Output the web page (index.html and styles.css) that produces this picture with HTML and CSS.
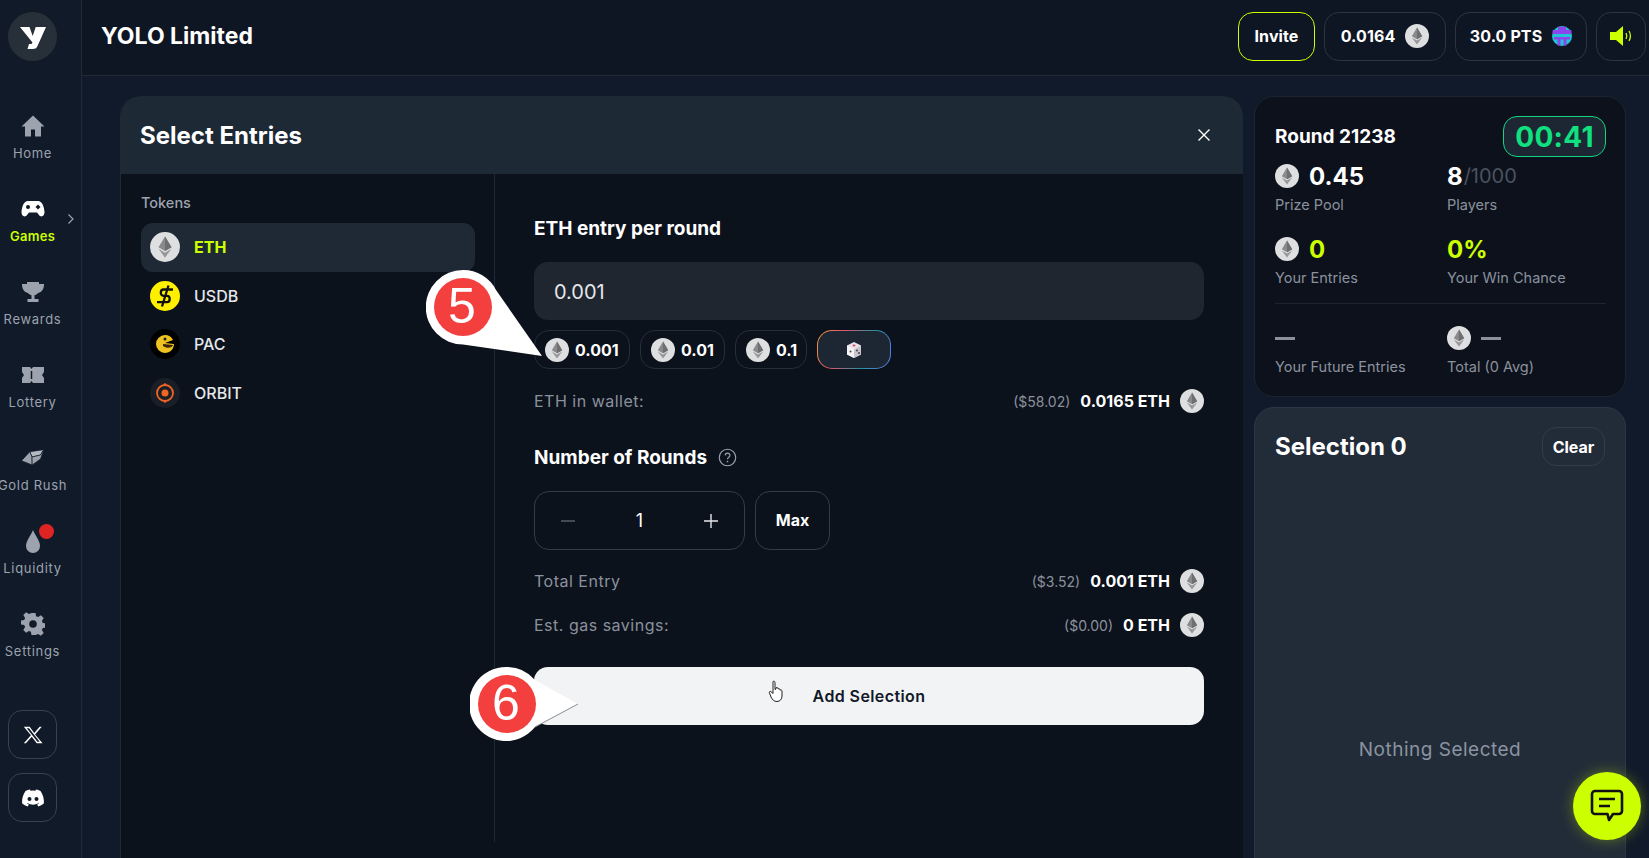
FILE: index.html
```html
<!DOCTYPE html>
<html lang="en">
<head>
    <meta charset="UTF-8">
    <title>YOLO Limited</title>
    <link rel="stylesheet" href="styles.css">
</head>
<body>
<svg class="defs" width="0" height="0">
    <symbol id="eth" viewBox="0 0 24 24">
        <circle cx="12" cy="12" r="12" fill="#dedfe0"/>
        <polygon points="12,3.5 6.8,12.2 12,15.2 17.2,12.2" fill="#8a8a8c"/>
        <polygon points="12,3.5 12,15.2 17.2,12.2" fill="#6f6f72"/>
        <polygon points="6.8,13.4 12,20.5 17.2,13.4 12,16.5" fill="#97979a"/>
    </symbol>
</svg>

<div class="app">
    <aside class="side">
        <div class="logo"><svg width="26" height="26" viewBox="0 0 26 26"><path d="M0 3h9.500l3.200 9 3-9H26l-8.500 19c-1 2.400-2.500 3-5 3H7.500l1.500-5h2.500l1-1.500z" fill="#fff"/></svg></div>
        <nav class="nav">
            <a class="nav-item">
                <svg class="nav-icon" viewBox="0 0 24 24"><path d="M12 1.500 0.500 12.500h3.500v10h6v-7h4v7h6v-10h3.500z" fill="#9ca3af"/></svg>
                <span>Home</span>
            </a>
            <a class="nav-item active">
                <svg class="nav-icon" viewBox="0 0 24 24"><path d="M7 4h10c4 0 6 5 6.500 11 .3 4-3.500 6-5.500 3l-2-2.500H8L6 18c-2 3-5.800 1-5.500-3C1 9 3 4 7 4z" fill="#fff"/><circle cx="7" cy="10" r="2" fill="#111a28"/><path d="M17 7.500l2.500 2.500-2.500 2.500-2.500-2.500z" fill="#111a28"/></svg>
                <span>Games</span>
                <svg class="chevron" width="8" height="12" viewBox="0 0 8 12"><path d="M1.500 1.500 6 6l-4.500 4.500" fill="none" stroke="#9ca3af" stroke-width="1.200"/></svg>
            </a>
            <a class="nav-item">
                <svg class="nav-icon" viewBox="0 0 24 24"><path d="M6 2h12v2h5c0 5-2 8-6 9-1 1.500-2.500 2-3.500 2.300V19h4v3H6.500v-3h4v-3.700C9.500 15 8 14.500 7 13c-4-1-6-4-6-9h5z" fill="#9ca3af"/></svg>
                <span>Rewards</span>
            </a>
            <a class="nav-item">
                <svg class="nav-icon" viewBox="0 0 24 24"><path d="M1 4h8l1.500 2L12 4h11v5l-2 3 2 3v5H12l-1.500-2L9 20H1v-5l2-3-2-3z" fill="#9ca3af"/><path d="M10.500 8v8" stroke="#111a28" stroke-width="1.500"/></svg>
                <span>Lottery</span>
            </a>
            <a class="nav-item">
                <svg class="nav-icon" viewBox="0 0 24 24"><g stroke="#111a28" stroke-width=".7"><polygon points="8.800,5.700 22.800,3.700 19.500,9 11,11" fill="#b5bac2"/><polygon points="0.500,14.700 8.800,5.700 11,11 11.200,19" fill="#9ca3af"/><polygon points="11,11 19.500,9 22.800,3.700 19.500,13 11.200,19" fill="#9ca3af"/></g></svg>
                <span class="wide">Gold Rush</span>
            </a>
            <a class="nav-item">
                <svg class="nav-icon" viewBox="0 0 24 24"><path d="M12 1c2 5 7 11 7 16a7 7 0 0 1-14 0c0-5 5-11 7-16z" fill="#9ca3af"/></svg>
                <span>Liquidity</span>
                <i class="dot"></i>
            </a>
            <a class="nav-item">
                <svg class="nav-icon" viewBox="0 0 24 24"><path d="M10 1h4l.6 3.200 2 .9L19.400 3.300l2.800 2.800-1.800 2.800.9 2 3.200.6v4l-3.200.6-.9 2 1.800 2.800-2.800 2.800-2.800-1.800-2 .9L14 23h-4l-.6-3.200-2-.9-2.800 1.800-2.800-2.800 1.800-2.800-.9-2L-.5 12.500v-4l3.200-.6.900-2-1.800-2.800 2.800-2.800 2.800 1.800 2-.9z" transform="translate(.5 0)" fill="#9ca3af"/><circle cx="12" cy="12" r="3.800" fill="#111a28"/></svg>
                <span>Settings</span>
            </a>
        </nav>
        <div class="socials">
            <a class="social"><svg width="20" height="20" viewBox="0 0 24 24"><path d="M1 2h7l5.500 7.500L20 2h2.500l-8 9.300L23.500 22h-7l-6-8L3.500 22H1l8.500-9.800zM4.500 3.800 17.300 20.200h2.700L7.200 3.800z" fill="#fff"/></svg></a>
            <a class="social"><svg width="22" height="18" viewBox="0 0 22 18"><path d="M18.500 2A17 17 0 0 0 14 .5l-.6 1.200a15 15 0 0 0-4.800 0L8 .5A17 17 0 0 0 3.500 2C.6 6.300-.2 10.500.2 14.600A17 17 0 0 0 5.700 17.500l1.200-1.900-1.900-.9.500-.4a12 12 0 0 0 11 0l.5.400-1.900.9 1.200 1.900a17 17 0 0 0 5.500-2.900c.5-4.800-.8-9-3.300-12.600z" fill="#fff"/><circle cx="7.500" cy="10" r="2" fill="#111a28"/><circle cx="14.500" cy="10" r="2" fill="#111a28"/></svg></a>
        </div>
    </aside>

    <div class="main">
        <header class="top">
            <div class="title">YOLO Limited</div>
            <div class="top-actions">
                <a class="pill invite">Invite</a>
                <a class="pill balance">0.0164 <svg class="eth"><use href="#eth"/></svg></a>
                <a class="pill points">30.0 PTS
                    <svg width="20" height="20" viewBox="0 0 20 20"><circle cx="10" cy="10" r="10" fill="#1fc4d6"/><path d="M6 .8h8V4h5.400v4H.6V4H6zM2 11h16v2.500h-3.500v6H11.500v-6h-3v6H5.500v-6H2z" fill="#8e44ec"/></svg>
                </a>
                <a class="pill sound">
                    <svg width="24" height="24" viewBox="0 0 24 24"><path d="M1 8h6l7-6v20l-7-6H1z" fill="#ccff00"/><path d="M17 9c1 1.800 1 4.200 0 6M20 7c1.700 3 1.700 7 0 10" fill="none" stroke="#ccff00" stroke-width="1.300"/></svg>
                </a>
            </div>
        </header>

        <div class="content">
            <section class="modal">
                <div class="modal-head">
                    <h2>Select Entries</h2>
                    <svg width="14" height="14" viewBox="0 0 14 14"><path d="M1.500 1.500l11 11M12.500 1.500l-11 11" stroke="#fff" stroke-width="1.400"/></svg>
                </div>
                <div class="modal-body">
                    <div class="tokens">
                        <div class="tokens-label">Tokens</div>
                        <div class="token selected"><svg class="token-icon"><use href="#eth"/></svg>ETH</div>
                        <div class="token">
                            <svg class="token-icon" viewBox="0 0 30 30"><circle cx="15" cy="15" r="15" fill="#fff000"/><path d="M23 8.500H13.500c-3.600 0-3.600 6.300 0 6.300h3.500c3.600 0 3.600 6.400 0 6.400H7M18.500 4.500l-6.500 21" fill="none" stroke="#111" stroke-width="2.300"/></svg>USDB
                        </div>
                        <div class="token">
                            <svg class="token-icon" viewBox="0 0 30 30"><circle cx="15" cy="15" r="15" fill="#000"/><path d="M15 6a9 9 0 0 1 8 5l-8 3 9 1c0 5-4 9-9 9A9 9 0 0 1 15 6z" fill="#eec21f"/><path d="M13 15l10 1c-1 3-6 4-10 1z" fill="#3b2408"/><circle cx="15" cy="10" r="1.500" fill="#222"/></svg>PAC
                        </div>
                        <div class="token">
                            <svg class="token-icon" viewBox="0 0 30 30"><circle cx="15" cy="15" r="15" fill="#1a1f27"/><circle cx="15" cy="15" r="8" fill="none" stroke="#f26522" stroke-width="1.800"/><circle cx="15" cy="15" r="3.500" fill="#f26522"/><circle cx="15" cy="6.500" r="1.300" fill="#f26522"/><circle cx="15" cy="23.500" r="1.300" fill="#f26522"/></svg>ORBIT
                        </div>
                    </div>

                    <div class="form">
                        <h3 class="form-title">ETH entry per round</h3>
                        <div class="amount">0.001</div>
                        <div class="chips">
                            <a class="chip c1"><svg class="eth"><use href="#eth"/></svg>0.001</a>
                            <a class="chip c2"><svg class="eth"><use href="#eth"/></svg>0.01</a>
                            <a class="chip c3"><svg class="eth"><use href="#eth"/></svg>0.1</a>
                            <a class="chip dice">
                                <svg width="18" height="18" viewBox="0 0 18 18"><path d="M9 1l7 3.500v9L9 17l-7-3.500v-9z" fill="#e9e4ea"/><path d="M9 8.500V17l7-3.500v-9z" fill="#c9c3cd"/><path d="M2 4.500 9 8.500V17l-7-3.500z" fill="#f6f2f5"/><ellipse cx="9" cy="4.500" rx="1.500" ry="1" fill="#e0435a"/><circle cx="5.500" cy="10.500" r="1" fill="#444"/><circle cx="12" cy="9.500" r="1" fill="#444"/><circle cx="14" cy="12" r="1" fill="#444"/></svg>
                            </a>
                        </div>
                        <div class="line wallet">
                            <span class="line-label">ETH in wallet:</span>
                            <span class="line-value"><small>($58.02)</small><b>0.0165 ETH</b><svg class="eth"><use href="#eth"/></svg></span>
                        </div>
                        <h3 class="form-title rounds">Number of Rounds
                            <svg width="19" height="19" viewBox="0 0 18 18"><circle cx="9" cy="9" r="7.800" fill="none" stroke="#9ca3af" stroke-width="1.100"/><path d="M6.800 7c.2-3 4.600-2.800 4.500 0 0 1.800-2.300 1.800-2.300 3.600" fill="none" stroke="#9ca3af" stroke-width="1.100"/><circle cx="9" cy="12.800" r=".8" fill="#9ca3af"/></svg>
                        </h3>
                        <div class="stepper-row">
                            <div class="stepper">
                                <svg width="16" height="16" viewBox="0 0 16 16"><path d="M1 8h14" stroke="#5b6370" stroke-width="1.400"/></svg>
                                <span>1</span>
                                <svg width="16" height="16" viewBox="0 0 16 16"><path d="M1 8h14M8 1v14" stroke="#e5e7eb" stroke-width="1.400"/></svg>
                            </div>
                            <a class="max">Max</a>
                        </div>
                        <div class="line total">
                            <span class="line-label">Total Entry</span>
                            <span class="line-value"><small>($3.52)</small><b>0.001 ETH</b><svg class="eth"><use href="#eth"/></svg></span>
                        </div>
                        <div class="line gas">
                            <span class="line-label">Est. gas savings:</span>
                            <span class="line-value"><small>($0.00)</small><b>0 ETH</b><svg class="eth"><use href="#eth"/></svg></span>
                        </div>
                        <a class="add">Add Selection</a>
                    </div>
                </div>
            </section>

            <div class="rail">
                <section class="round">
                    <div class="round-head">
                        <span class="round-title">Round 21238</span>
                        <span class="timer">00:41</span>
                    </div>
                    <div class="stats">
                        <div>
                            <div class="stat-value"><svg class="eth"><use href="#eth"/></svg>0.45</div>
                            <div class="stat-label">Prize Pool</div>
                        </div>
                        <div>
                            <div class="stat-value">8<em>/1000</em></div>
                            <div class="stat-label">Players</div>
                        </div>
                        <div>
                            <div class="stat-value lime"><svg class="eth"><use href="#eth"/></svg>0</div>
                            <div class="stat-label">Your Entries</div>
                        </div>
                        <div>
                            <div class="stat-value lime">0%</div>
                            <div class="stat-label">Your Win Chance</div>
                        </div>
                    </div>
                    <div class="divider"></div>
                    <div class="stats">
                        <div>
                            <div class="stat-value"><i class="dash"></i></div>
                            <div class="stat-label">Your Future Entries</div>
                        </div>
                        <div>
                            <div class="stat-value"><svg class="eth"><use href="#eth"/></svg><i class="dash"></i></div>
                            <div class="stat-label">Total (0 Avg)</div>
                        </div>
                    </div>
                </section>
                <section class="selection">
                    <div class="selection-head">
                        <h2>Selection 0</h2>
                        <a class="clear">Clear</a>
                    </div>
                    <div class="empty">Nothing Selected</div>
                </section>
            </div>
        </div>
    </div>
</div>

<a class="chat">
    <svg width="36" height="36" viewBox="0 0 36 36"><path d="M6 3h24a3 3 0 0 1 3 3v17a3 3 0 0 1-3 3h-6l-4 6-1.500-6H6a3 3 0 0 1-3-3V6a3 3 0 0 1 3-3z" fill="none" stroke="#111" stroke-width="2.600" stroke-linejoin="round"/><path d="M10 11h16M10 18h11" stroke="#111" stroke-width="2.600"/></svg>
</a>

<div class="callout callout-5">
    <svg width="130" height="100" viewBox="0 0 130 100"><path d="M37 0a37 37 0 0 1 33 20l46 66-79-11.500A37 37 0 0 1 37 0z" fill="#fff"/><circle cx="37" cy="37" r="29" fill="#f43f3f"/></svg>
    <span>5</span>
</div>
<div class="callout callout-6">
    <svg width="110" height="76" viewBox="0 0 110 76"><path d="M37 1a37 37 0 0 1 28 13l43 24-43 23A37 37 0 1 1 37 1z" fill="#fff"/><path d="M65 61l43-23" stroke="#8a8d92" stroke-width="1"/><circle cx="37" cy="38" r="29" fill="#f43f3f"/></svg>
    <span>6</span>
</div>
<svg class="cursor" width="18" height="23" viewBox="0 0 18 23"><path d="M5 1.500c1-.8 2 0 2 1v7l1-.5V7.800c1-.8 2-.2 2 .7v.5c1-.7 2-.2 2 .7v.5c1-.6 2 0 2 .8v5c0 3-2 5.500-5 5.500-3.500 0-4.500-2-6-4.500L1.500 13c-.8-1 .6-2.200 1.500-1.300L5 13.500z" fill="#fff" stroke="#222" stroke-width="1"/></svg>
</body>
</html>
```

FILE: styles.css
```css
* {
    box-sizing: border-box;
}

html, body {
    height: 100%;
    margin: 0;
    overflow: hidden;
}

body {
    background: #111a2a;
    color: #fff;
    font-family: "Inter", "Noto Sans", sans-serif;
}

h2, h3 {
    margin: 0;
}

.defs {
    position: absolute;
}

.app {
    display: flex;
    height: 100%;
}

/* sidebar */
.side {
    width: 82px;
    flex: none;
    padding: 12px 0 0 8px;
    background: #111a28;
    border-right: 1px solid #1f2937;
}

.logo {
    width: 49px;
    height: 49px;
    border-radius: 50%;
    background: #273038;
    display: flex;
    align-items: center;
    justify-content: center;
}

.nav {
    margin-top: 53px;
    display: flex;
    flex-direction: column;
    gap: 35px;
}

.nav-item {
    position: relative;
    width: 49px;
    height: 48px;
    display: flex;
    flex-direction: column;
    align-items: center;
    font-size: 13px;
    line-height: 18px;
    letter-spacing: 0.7px;
    color: #9ca3af;
    white-space: nowrap;
}

.nav-item span {
    margin-top: 6px;
}

.nav-icon {
    width: 24px;
    height: 24px;
    flex: none;
}

.nav-item.active {
    color: #ccff00;
    font-weight: 600;
    letter-spacing: 0.3px;
}

.chevron {
    position: absolute;
    left: 59px;
    top: 16px;
}

.dot {
    position: absolute;
    left: 31px;
    top: -5px;
    width: 15px;
    height: 15px;
    border-radius: 50%;
    background: #e02424;
}

.socials {
    margin-top: 50px;
    display: flex;
    flex-direction: column;
    gap: 14px;
}

.social {
    width: 49px;
    height: 49px;
    border: 1px solid #374151;
    border-radius: 14px;
    display: flex;
    align-items: center;
    justify-content: center;
}

/* top bar */
.main {
    flex: 1;
    min-width: 0;
    display: flex;
    flex-direction: column;
}

.top {
    height: 76px;
    flex: none;
    padding: 0 3px 3px 19px;
    background: #0f1623;
    border-bottom: 1px solid #1f2937;
    display: flex;
    align-items: center;
    justify-content: space-between;
}

.title {
    font-size: 23px;
    font-weight: 700;
}

.top-actions {
    display: flex;
    gap: 9px;
}

.pill {
    height: 49px;
    border: 1px solid #2b3442;
    border-radius: 15px;
    display: flex;
    align-items: center;
    justify-content: center;
    gap: 10px;
    font-size: 16px;
    font-weight: 700;
    letter-spacing: 0.1px;
}

.invite {
    width: 77px;
    border-color: #ccff00;
}

.balance {
    width: 122px;
}

.points {
    width: 132px;
}

.sound {
    width: 50px;
}

.eth {
    width: 24px;
    height: 24px;
    flex: none;
}

/* main area */
.content {
    flex: 1;
    min-height: 0;
    padding: 20px 22px 0 38px;
    display: flex;
    gap: 11px;
    overflow: hidden;
}

.modal {
    width: 1123px;
    flex: none;
    height: 900px;
    background: #0c121c;
    border-radius: 20px 20px 0 0;
    border-left: 1px solid #1f2937;
}

.modal-head {
    height: 78px;
    padding: 0 32px 0 19px;
    background: #1e2936;
    border-radius: 20px 20px 0 0;
    display: flex;
    align-items: center;
    justify-content: space-between;
}

.modal-head h2 {
    font-size: 24px;
    font-weight: 700;
}

.modal-body {
    display: flex;
}

.tokens {
    width: 374px;
    height: 668px;
    flex: none;
    padding: 19px 19px 0 20px;
    border-right: 1px solid #1f2937;
}

.tokens-label {
    font-size: 14.5px;
    line-height: 20px;
    font-weight: 500;
    color: #9ca3af;
    margin-bottom: 10px;
}

.token {
    height: 48.6px;
    padding-left: 9px;
    display: flex;
    align-items: center;
    gap: 14px;
    font-size: 16px;
    line-height: 20px;
    font-weight: 500;
    color: #e5e7eb;
    border-radius: 12px;
}

.token-icon {
    width: 30px;
    height: 30px;
    flex: none;
}

.token.selected {
    background: #1f2935;
    color: #ccff00;
    font-weight: 700;
}

/* entry form */
.form {
    flex: 1;
    padding: 42px 39px 0 39px;
}

.form-title {
    height: 24px;
    padding-top: 1px;
    font-size: 19px;
    line-height: 24px;
    font-weight: 700;
}

.amount {
    margin-top: 22px;
    height: 58px;
    padding: 1px 0 0 20px;
    background: #1f2630;
    border-radius: 14px;
    display: flex;
    align-items: center;
    font-size: 20px;
    color: #e5e7eb;
}

.chips {
    margin-top: 10px;
    display: flex;
    gap: 10px;
}

.chip {
    height: 39px;
    padding-left: 10px;
    border: 1px solid #262e3a;
    border-radius: 15px;
    display: flex;
    align-items: center;
    gap: 6px;
    font-size: 16px;
    font-weight: 700;
}

.c1 {
    width: 96px;
}

.c2 {
    width: 85px;
}

.c3 {
    width: 72px;
}

.chip.dice {
    width: 74px;
    padding: 0;
    justify-content: center;
    border: 1.500px solid transparent;
    background: linear-gradient(#1d2633, #1d2633) padding-box,
        linear-gradient(110deg, #f0a23c, #e2556b 30%, #2b8f9c 65%, #5a7bf0) border-box;
}

.line {
    height: 24px;
    display: flex;
    align-items: center;
    justify-content: space-between;
}

.wallet {
    margin-top: 20px;
}

.total {
    margin-top: 19px;
}

.gas {
    margin-top: 20px;
}

.line-label {
    font-size: 16px;
    color: #8b919c;
    letter-spacing: 0.5px;
}

.line-value {
    display: flex;
    align-items: center;
    gap: 10px;
}

.line-value small {
    font-size: 14px;
    color: #8b919c;
}

.line-value b {
    font-size: 16px;
    font-weight: 700;
}

.rounds {
    margin-top: 32px;
    display: flex;
    align-items: center;
    gap: 11px;
}

.stepper-row {
    margin-top: 22px;
    display: flex;
    gap: 10px;
}

.stepper {
    width: 211px;
    height: 59px;
    padding: 0 25px;
    border: 1px solid #343c49;
    border-radius: 15px;
    display: flex;
    align-items: center;
    justify-content: space-between;
    font-size: 18px;
}

.max {
    width: 75px;
    height: 59px;
    padding-bottom: 1px;
    border: 1px solid #343c49;
    border-radius: 15px;
    display: flex;
    align-items: center;
    justify-content: center;
    font-size: 16px;
    font-weight: 700;
}

.add {
    margin-top: 30px;
    height: 58px;
    padding-bottom: 1px;
    background: #f1f3f5;
    border-radius: 14px;
    color: #111827;
    display: flex;
    align-items: center;
    justify-content: center;
    font-size: 16px;
    font-weight: 600;
    letter-spacing: 0.4px;
}

/* right rail */
.rail {
    width: 372px;
    flex: none;
    display: flex;
    flex-direction: column;
    gap: 10px;
}

.round {
    flex: none;
    height: 301px;
    padding: 19px 19px 0 20px;
    background: #0c111c;
    border: 1px solid #1c2431;
    border-radius: 20px;
}

.round-head {
    height: 41px;
    display: flex;
    align-items: center;
    justify-content: space-between;
}

.round-title {
    font-size: 19px;
    font-weight: 700;
}

.timer {
    width: 103px;
    height: 41px;
    border: 1px solid #10d67f;
    border-radius: 14px;
    background: #1c2733;
    color: #10e080;
    display: flex;
    align-items: center;
    justify-content: center;
    font-size: 28px;
    font-weight: 700;
    letter-spacing: 0.3px;
}

.stats {
    margin-top: 7px;
    display: grid;
    grid-template-columns: 172px 1fr;
    row-gap: 22px;
}

.stat-value {
    height: 24px;
    display: flex;
    align-items: center;
    gap: 10px;
    font-size: 24px;
    font-weight: 700;
}

.stat-value em {
    margin-left: -9px;
    font-style: normal;
    font-weight: 400;
    font-size: 20px;
    color: #4b5260;
}

.lime {
    color: #ccff00;
}

.stat-label {
    margin-top: 7px;
    font-size: 14.5px;
    line-height: 20px;
    color: #8b919c;
}

.dash {
    width: 20px;
    height: 3px;
    background: #8b919c;
}

.divider {
    margin-top: 15px;
    height: 1px;
    background: #1c2431;
}

.divider + .stats {
    margin-top: 22px;
}

.selection {
    flex: none;
    height: 500px;
    padding: 19px 20px 0 20px;
    background: #222c38;
    border: 1px solid #2d3744;
    border-radius: 20px;
}

.selection-head {
    display: flex;
    align-items: center;
    justify-content: space-between;
}

.selection-head h2 {
    font-size: 24px;
    font-weight: 700;
}

.clear {
    width: 63px;
    height: 39px;
    border: 1px solid #323c4a;
    border-radius: 14px;
    display: flex;
    align-items: center;
    justify-content: center;
    font-size: 16px;
    font-weight: 700;
}

.empty {
    margin-top: 272px;
    text-align: center;
    font-size: 19px;
    line-height: 24px;
    color: #8b93a1;
    letter-spacing: 0.5px;
}

/* things laid over the page */
.chat {
    position: absolute;
    left: 1573px;
    top: 772px;
    width: 68px;
    height: 68px;
    border-radius: 50%;
    background: #ccff00;
    box-shadow: 0 0 14px rgba(204, 255, 0, 0.35);
    display: flex;
    align-items: center;
    justify-content: center;
}

.callout {
    position: absolute;
}

.callout svg {
    display: block;
}

.callout span {
    position: absolute;
    left: 0;
    width: 72px;
    text-align: center;
    font-family: "Liberation Sans", Arial, sans-serif;
    font-size: 50px;
    line-height: 74px;
    color: #fff;
}

.callout-5 {
    left: 426px;
    top: 270px;
}

.callout-5 span {
    top: -1px;
}

.callout-6 {
    left: 470px;
    top: 666px;
}

.callout-6 span {
    top: 0;
}

.cursor {
    position: absolute;
    left: 768px;
    top: 680px;
}
```
